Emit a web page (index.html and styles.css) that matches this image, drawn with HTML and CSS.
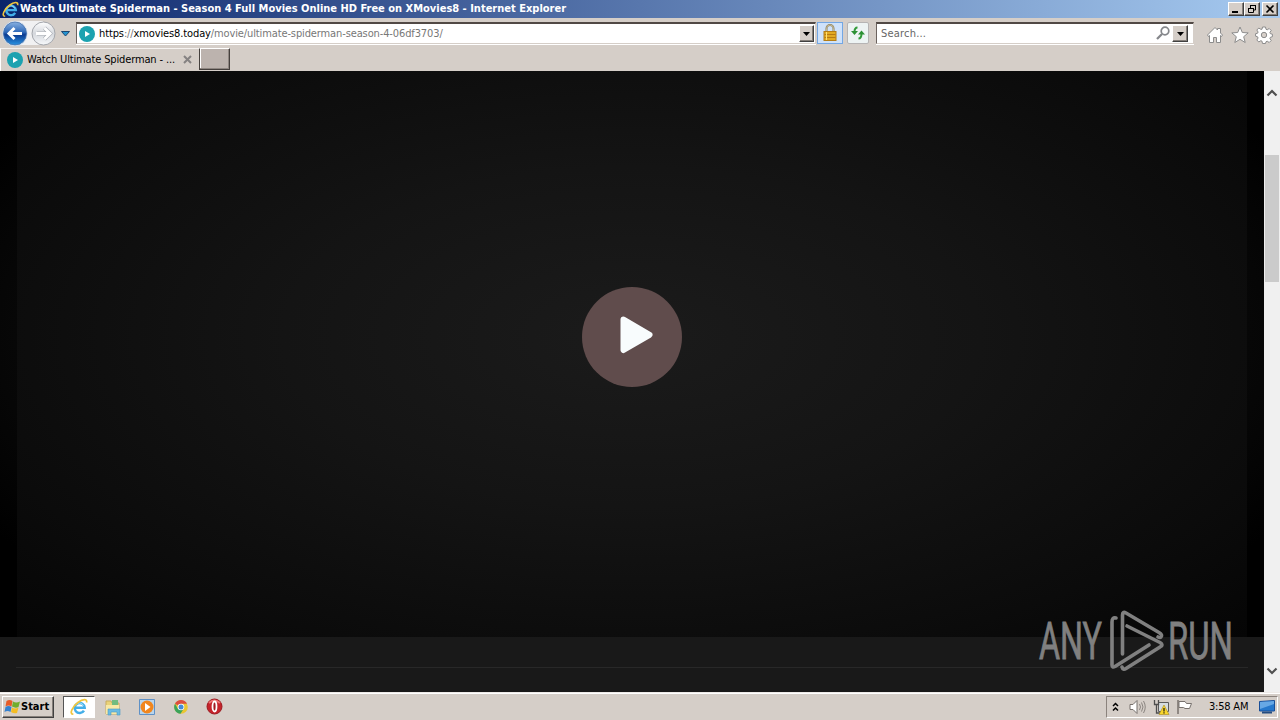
FILE: index.html
```html
<!DOCTYPE html>
<html lang="en">
<head>
    <meta charset="utf-8">
    <title>Watch Ultimate Spiderman - Season 4 Full Movies Online HD Free on XMovies8</title>
    <link rel="stylesheet" href="styles.css">
</head>
<body>
    <!-- shared shapes -->
    <svg class="defs" width="0" height="0">
        <symbol id="ie" viewBox="0 0 20 20">
            <path d="M15.500 14A5.600 5.600 0 1 1 16.300 10.800H6.500" fill="none" stroke="#43aee8" stroke-width="2.800"/>
            <path d="M15 8.700A5 5 0 0 0 6 8" fill="none" stroke="#a4e2fb" stroke-width="1"/>
            <path d="M3.700 18C-1.400 18 2.800 9.500 8.800 5C14 1 19.500.400 18.400 5" fill="none" stroke="#f0c53e" stroke-width="1.900"/>
        </symbol>
        <symbol id="site" viewBox="0 0 16 16">
            <circle cx="8" cy="8" r="8" fill="#1ca2b0"/>
            <path d="M6 5l5 3-5 3z" fill="#fff"/>
        </symbol>
    </svg>

    <div class="titlebar">
        <svg class="title-icon"><use href="#ie"/></svg>
        <span class="title-text">Watch Ultimate Spiderman - Season 4 Full Movies Online HD Free on XMovies8 - Internet Explorer</span>
        <div class="win-buttons">
            <div class="win-btn"><svg width="14" height="12"><path d="M3 9h6" stroke="#000" stroke-width="2"/></svg></div>
            <div class="win-btn"><svg width="14" height="12"><path d="M5.500 5V2.500h5V7H9M5 2.500h6M3.500 5.500h5v4h-5zM3 5.500h6" fill="none" stroke="#000"/></svg></div>
            <div class="win-btn win-close"><svg width="14" height="12"><path d="M3.500 2.500l7 7M10.500 2.500l-7 7" stroke="#000" stroke-width="1.600"/></svg></div>
        </div>
    </div>

    <div class="navbar">
        <svg class="nav-arrows" width="74" height="30" viewBox="0 0 74 30">
            <defs>
                <linearGradient id="blue" x1="0" y1="0" x2="0" y2="1">
                    <stop offset="0" stop-color="#8fb6e4"/>
                    <stop offset=".45" stop-color="#2e68b8"/>
                    <stop offset=".55" stop-color="#0c3b91"/>
                    <stop offset="1" stop-color="#2c9ae8"/>
                </linearGradient>
                <linearGradient id="pale" x1="0" y1="0" x2="0" y2="1">
                    <stop offset="0" stop-color="#fff"/>
                    <stop offset=".5" stop-color="#d5d8dd"/>
                    <stop offset="1" stop-color="#f7f9fb"/>
                </linearGradient>
            </defs>
            <path d="M15 3H43V27H15z" fill="#f1f1f2"/>
            <circle cx="15" cy="15.500" r="12.200" fill="url(#blue)" stroke="#e6ebf3"/>
            <circle cx="15" cy="15.500" r="11.500" fill="none" stroke="#4974ad" stroke-width=".8"/>
            <path d="M22 15.500H10M14.500 10L9 15.500l5.500 5.500" fill="none" stroke="#fff" stroke-width="3"/>
            <circle cx="43.500" cy="15.500" r="11.500" fill="url(#pale)" stroke="#a3a6ac"/>
            <path d="M37 15.500h12M44.500 10l5.500 5.500-5.500 5.500" fill="none" stroke="#a7abb2" stroke-width="4"/>
            <path d="M36 15.500h13M44.500 10l5.500 5.500-5.500 5.500" fill="none" stroke="#fff" stroke-width="3"/>
            <path d="M61.500 13.500h8l-4 4.500z" fill="#2494d1" stroke="#1c4873"/>
        </svg>
        <div class="field address">
            <svg class="site-icon"><use href="#site"/></svg>
            <span class="url"><span>https</span>://<span>xmovies8.today</span>/movie/ultimate-spiderman-season-4-06df3703/</span>
            <div class="drop"><svg width="11" height="12"><path d="M2 4h7L5.500 8z"/></svg></div>
        </div>
        <div class="tool lock">
            <svg width="16" height="18" viewBox="0 0 16 18">
                <path d="M4.500 8V4.500a3.500 3.500 0 0 1 7 0V8" fill="none" stroke="#8f8158" stroke-width="2"/>
                <path d="M4.500 8V4.500a3.500 3.500 0 0 1 7 0V8" fill="none" stroke="#d8ceb0" stroke-width=".7"/>
                <rect x="2" y="7.500" width="12" height="9" fill="#e2aa22" stroke="#b47d16"/>
                <path d="M2.500 10.500h11M2.500 13.500h11" stroke="#b77b13"/>
                <path d="M4.500 8v8" stroke="#ffe073"/>
            </svg>
        </div>
        <div class="tool reload">
            <svg width="16" height="16" viewBox="0 0 16 16">
                <path d="M7.500 2.500Q4.500 2.500 4.500 7M8.500 13.500q3 0 3-5" fill="none" stroke="#329b39" stroke-width="2"/>
                <path d="M1 6h7l-3.500 4zM8 9.500h7l-3.500-4z" fill="#2c9034"/>
            </svg>
        </div>
        <div class="field search">
            <span class="search-text">Search...</span>
            <svg width="15" height="15" viewBox="0 0 15 15"><circle cx="9" cy="5" r="3.800" fill="none" stroke="#85878b" stroke-width="1.700"/><path d="M6 8l-5 5" stroke="#85878b" stroke-width="2.300"/></svg>
            <div class="drop"><svg width="11" height="12"><path d="M2 4h7L5.500 8z"/></svg></div>
        </div>
        <div class="commands">
            <svg width="18" height="18" viewBox="0 0 18 18"><path d="M1.500 9L9 1.500l2.500 2.500V2.500h3V7l2 2-1 1.500-1-1V16.500h-4v-5h-3v5h-4v-7l-1 1z" fill="#fff" stroke="#8c8c8c"/></svg>
            <svg width="18" height="18" viewBox="0 0 18 18"><path d="M9 1l2.300 5.500 5.900.4-4.500 3.800 1.500 5.800L9 13.300l-5.200 3.200 1.500-5.800L.800 6.900l5.900-.4z" fill="#fff" stroke="#8c8c8c"/></svg>
            <svg width="18" height="18" viewBox="0 0 18 18"><path d="M7.500 1h3l.5 2.300 1.200.5 2-1.300 2 2-1.300 2 .5 1.200 2 .5v2.500l-2 .6-.5 1.200 1.300 2-2 2-2-1.300-1.200.5-.5 1.800h-3L7 15.200l-1.200-.5-2 1.300-2-2 1.300-2-.5-1.200-2-.6V7.700l2-.5.500-1.200-1.300-2 2-2 2 1.300L7 3.300z" fill="#fff" stroke="#8c8c8c"/><circle cx="9" cy="9" r="2.700" fill="#d6cfc9" stroke="#8c8c8c"/></svg>
        </div>
    </div>

    <div class="tabs">
        <div class="tab">
            <svg class="site-icon"><use href="#site"/></svg>
            <span class="tab-text">Watch Ultimate Spiderman - ...</span>
            <svg width="9" height="9"><path d="M1 1l7 7M8 1l-7 7" stroke="#858282" stroke-width="2"/></svg>
        </div>
        <div class="new-tab"></div>
    </div>

    <div class="viewport">
        <div class="page">
            <div class="player">
                <div class="video">
                    <div class="play">
                        <svg width="40" height="44" viewBox="0 0 40 44"><path d="M8.500 5.500L34.500 20.800 8.500 36z" fill="#f8fcfd" stroke="#f8fcfd" stroke-width="6" stroke-linejoin="round"/></svg>
                    </div>
                </div>
            </div>
            <div class="below"></div>
            <svg class="watermark" width="204" height="68" viewBox="0 0 204 68">
                <text x="1" y="51" textLength="63" lengthAdjust="spacingAndGlyphs">ANY</text>
                <g fill="none" stroke="#808080" stroke-width="3.600" stroke-linejoin="round" stroke-linecap="round">
                    <path d="M78 10Q74 9 74 14V57Q74 60 77 58.500L111 37"/>
                    <path d="M84.500 46V7Q84.500 3 88 5L121 24.500Q125 27 123 29Q122 30 120 29"/>
                    <path d="M89 18L122 34.500Q126 37 122 39L88 60.500Q85 62.500 84 59"/>
                </g>
                <text x="130" y="51" textLength="65" lengthAdjust="spacingAndGlyphs">RUN</text>
            </svg>
        </div>
        <div class="scrollbar">
            <svg width="12" height="8"><path d="M1.500 6.500L6 2l4.500 4.500" fill="none" stroke="#505050" stroke-width="2.200"/></svg>
            <div class="thumb"></div>
            <svg class="scroll-down" width="12" height="8"><path d="M1.500 1.500L6 6l4.500-4.500" fill="none" stroke="#505050" stroke-width="2.200"/></svg>
        </div>
    </div>

    <div class="taskbar">
        <div class="start">
            <svg width="17" height="16" viewBox="0 0 16 16">
                <path d="M2 2q3-2 6 0L7 7.500Q4 5.500 1 7.500z" fill="#e65b27"/>
                <path d="M8.500 2.500q3 2 7 0L14 8Q11 9.500 7.500 7.500z" fill="#71ad2c"/>
                <path d="M1 8q3-2 6 0l-1 5Q3 11 0 13z" fill="#3481cf"/>
                <path d="M7.500 8.500q3 2 6.500 0L12.500 14q-3 1-6-1z" fill="#f4bd24"/>
            </svg>
            <span>Start</span>
        </div>
        <div class="task active"><svg width="18" height="18"><use href="#ie"/></svg></div>
        <div class="task">
            <svg width="18" height="18" viewBox="0 0 18 18"><path d="M2 3h5l1 2h7v11H2z" fill="#ead37a" stroke="#c8ad5e"/><path d="M8 2h6v5H8z" fill="#71bc80"/><path d="M2 7h13v9H2z" fill="#f8e9a6"/><path d="M4 17v-6h12v6h-3v-3H7v3z" fill="#6bbbe2" stroke="#4a9bc6" stroke-width=".6"/></svg>
        </div>
        <div class="task">
            <svg width="18" height="18" viewBox="0 0 18 18"><path d="M1.500 1.500h15v15h-15z" fill="#b9d5ec" stroke="#5f91c6"/><circle cx="9" cy="9" r="6.500" fill="#f1861d"/><path d="M7 5l5.500 4L7 13z" fill="#fff"/></svg>
        </div>
        <div class="task">
            <svg width="16" height="16" viewBox="0 0 16 16"><circle cx="8" cy="8" r="6.800" fill="#eac632"/><path d="M8 8L2 4.700A6.800 6.800 0 0 1 14 4.700H8z" fill="#dc4d40"/><path d="M2 4.700A6.800 6.800 0 0 0 7.500 14.800L10.500 10H5z" fill="#3ba35b"/><circle cx="8" cy="8" r="3.300" fill="#fff"/><circle cx="8" cy="8" r="2.500" fill="#438bd7"/></svg>
        </div>
        <div class="task opera">
            <svg width="17" height="17" viewBox="0 0 17 17"><circle cx="8.500" cy="8.500" r="7.500" fill="#c5232b" stroke="#9b1920"/><path d="M3 5q5-5 11 0" fill="none" stroke="#ed7474" stroke-width="2"/><ellipse cx="8.500" cy="8.500" rx="2" ry="5" fill="#a21b22" stroke="#fff" stroke-width="1.800"/></svg>
        </div>
        <div class="tray">
            <svg width="7" height="10"><path d="M1 4l2.500-2.500L6 4M1 8.500L3.500 6 6 8.500" fill="none" stroke="#000" stroke-width="1.500"/></svg>
            <svg class="speaker" width="17" height="16" viewBox="0 0 17 16"><path d="M1 5.500h3l4-4v13l-4-4H1z" fill="#fff" stroke="#77716d"/><path d="M10.500 5q2 3 0 6M12.500 3.500q3 4.500 0 9M14.500 2q3.500 6 0 12" fill="none" stroke="#8b8581"/></svg>
            <svg class="network" width="17" height="16" viewBox="0 0 17 16"><path d="M5.500 3.500h10v9h-10z" fill="#d6dce0" stroke="#5b5b5b"/><path d="M1.500 1v4.500h4V1M3.500 5v9h5" fill="none" stroke="#4e4e4e" stroke-width="1.300"/><path d="M11 6l5 9.500H6z" fill="#f9d62c" stroke="#a88a1c" stroke-width=".6"/><path d="M11 9v3.500M11 13.300v1.200" stroke="#292310" stroke-width="1.300"/></svg>
            <svg class="flag" width="17" height="16" viewBox="0 0 17 16"><path d="M2 1v14" stroke="#77716d" stroke-width="1.500"/><path d="M3 2.500h6l1.500 2h5l-2 5H9l-1.500-1H3z" fill="#fff" stroke="#77716d"/></svg>
            <span class="clock">3:58 AM</span>
            <svg width="16" height="14" viewBox="0 0 16 14"><path d="M.5 1.500l15-1v10.500H.5z" fill="#2678cc" stroke="#194f99"/><path d="M1 2l14-1v3L1 9z" fill="#67a8e5"/><path d="M3 12.500h10" stroke="#244c80" stroke-width="2"/></svg>
        </div>
    </div>
</body>
</html>
```
FILE: styles.css
```css
* {
    box-sizing: border-box;
}
body {
    display: flex;
    flex-direction: column;
    width: 1280px;
    height: 720px;
    margin: 0;
    overflow: hidden;
    background: #d5cec8;
    font: 11px "DejaVu Sans Condensed", "DejaVu Sans", sans-serif;
    color: #000;
}
svg {
    display: block;
    flex: none;
}
.defs {
    position: absolute;
}
span {
    white-space: nowrap;
}
.titlebar {
    display: flex;
    align-items: center;
    height: 18px;
    padding: 0 2px;
    background: linear-gradient(90deg, #0a246a, #a6caf0);
}
.title-icon {
    width: 17px;
    height: 17px;
}
.title-text {
    margin-left: 1px;
    padding-bottom: 1px;
    color: #fff;
    font-weight: bold;
}
.win-buttons {
    display: flex;
    margin-left: auto;
}
.win-btn, .drop, .start {
    background: #d5cec8;
    border: 1px solid;
    border-color: #fff #404040 #404040 #fff;
    box-shadow: inset -1px -1px #857f7a;
}
.win-btn {
    width: 16px;
    height: 14px;
}
.win-close {
    margin-left: 2px;
}

/* address row */
.navbar {
    display: flex;
    height: 30px;
    padding-right: 7px;
}
.nav-arrows {
    margin-right: 2px;
}
.field {
    display: flex;
    align-items: center;
    height: 22px;
    margin-top: 4px;
    padding-right: 2px;
    background: #fff;
    border: 1px solid;
    border-top: 2px solid #514945;
    border-color: #514945 #d5cec8 #d5cec8 #6b625e;
    box-shadow: 0 1px #fff;
}
.address {
    width: 740px;
    padding: 0 1px 0 2px;
}
.site-icon {
    width: 16px;
    height: 16px;
}
.url {
    margin-left: 4px;
    color: #777;
    letter-spacing: -0.12px;
}
.url span {
    color: #000;
}
.drop {
    display: flex;
    align-items: center;
    justify-content: center;
    width: 15px;
    height: 17px;
    margin-left: auto;
}
.tool {
    display: flex;
    align-items: center;
    justify-content: center;
    height: 22px;
    margin-top: 4px;
}
.lock {
    width: 26px;
    margin-left: 1px;
    border: 1px solid #73a7e4;
    background: #cfe2fa;
}
.reload {
    width: 22px;
    margin-left: 4px;
    border: 1px solid #b6b4b4;
    border-radius: 2px;
    background: #edf3f3;
}
.search {
    width: 318px;
    margin-left: 7px;
    padding: 0 5px 0 4px;
}
.search-text {
    margin-right: auto;
    color: #666;
    letter-spacing: 0.2px;
}
.search .drop {
    width: 16px;
    margin-left: 1px;
}
.commands {
    display: flex;
    gap: 6.5px;
    margin: 8px 0 0 auto;
}

.tabs {
    display: flex;
    height: 23px;
}
.tab {
    display: flex;
    align-items: center;
    width: 199px;
    padding: 0 7px 1px 6px;
    border-top: 1px solid #f5f2f0;
    border-left: 1px solid #fff;
}
.tab-text {
    width: 152px;
    margin: 0 4px;
    letter-spacing: -0.14px;
}
.new-tab {
    width: 31px;
    height: 22px;
    border: 1px solid #45403d;
    border-top-color: #fff;
    background: #bcb3ae;
    box-shadow: inset -1px -1px #8e8681, inset 1px 0 #fff;
}

/* web page area */
.viewport {
    display: flex;
    height: 621px;
}
.page {
    position: relative;
    width: 1264px;
    background: #191919;
}
.player {
    height: 566px;
    padding: 0 17px;
    background: radial-gradient(ellipse at 50% 47%, #171717, #0d0d0d 55%, #000 85%);
}
.video {
    display: flex;
    align-items: center;
    justify-content: center;
    height: 100%;
    padding-bottom: 34px;
    background: radial-gradient(ellipse at 50% 47%, #1b1b1b 0, #141414 40%, #0b0b0b 78%, #050505 100%);
}
.play {
    display: flex;
    align-items: center;
    justify-content: center;
    width: 100px;
    height: 100px;
    padding: 0 0 2px 5px;
    border-radius: 50%;
    background: #604c4c;
}
.below {
    height: 31px;
    margin: 0 16px;
    border-bottom: 1px solid #282828;
}
.watermark {
    position: absolute;
    right: 22px;
    bottom: 16px;
}
.watermark text {
    font: 51px "Roboto", "Liberation Sans", sans-serif;
    fill: #808080;
    stroke: #808080;
    stroke-width: 0.8px;
}
.scrollbar {
    display: flex;
    flex-direction: column;
    align-items: center;
    width: 16px;
    padding: 18px 0 17px;
    background: #f0f0f0;
}
.thumb {
    width: 14px;
    height: 127px;
    margin-top: 58px;
    background: #cbcbcb;
}
.scroll-down {
    margin-top: auto;
}

.taskbar {
    display: flex;
    align-items: center;
    height: 28px;
    padding: 1px 2px 1px;
    border-top: 1px solid #eeeae7;
    box-shadow: inset 0 1px #fff;
}
.start {
    display: flex;
    align-items: center;
    width: 52px;
    height: 22px;
    padding-left: 1px;
    font-weight: bold;
}
.task {
    display: flex;
    align-items: center;
    justify-content: center;
    width: 34px;
    height: 22px;
}
.active {
    width: 32px;
    margin: 0 1px 0 9px;
    border: 1px solid;
    border-color: #555 #fff #fff #555;
    background: #fff;
}
.opera {
    width: 33px;
}
.tray {
    display: flex;
    align-items: center;
    width: 172px;
    height: 22px;
    margin-left: auto;
    padding: 0 2px 0 5px;
    border: 1px solid;
    border-color: #8b837d #fff #fff #8b837d;
}
.speaker {
    margin-left: 10px;
}
.network, .flag {
    margin-left: 7px;
}
.flag {
    margin-left: 6px;
}
.clock {
    width: 42px;
    margin: 0 9px 0 16px;
    letter-spacing: -0.2px;
}
```
